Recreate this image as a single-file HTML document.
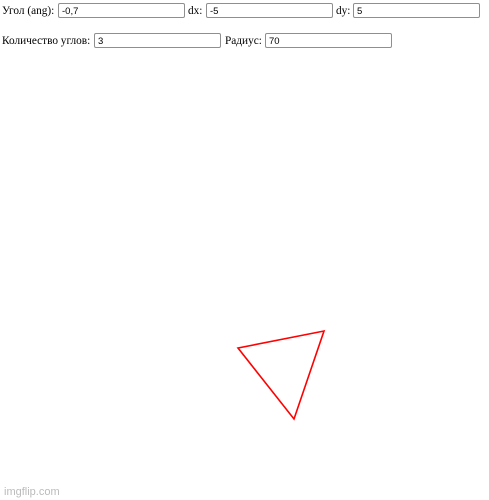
<!DOCTYPE html>
<html><head><meta charset="utf-8"><style>
body{margin:0;width:489px;height:500px;background:#fff;position:relative;overflow:hidden;font-family:"Liberation Serif",serif;font-size:11.3px;color:#000}
.l{position:absolute;line-height:14px;white-space:nowrap}
.i{position:absolute;box-sizing:border-box;height:15px;border:1px solid #8f8f8f;border-radius:2px;font-family:"Liberation Sans",sans-serif;font-size:9.5px;padding:2px 3px 0;line-height:11px;background:#fff}
</style></head><body>
<div class="l" style="left:2px;top:4px">Угол (ang):</div>
<div class="i" style="left:58px;top:3px;width:127px">-0,7</div>
<div class="l" style="left:188px;top:4px">dx:</div>
<div class="i" style="left:206px;top:3px;width:127px">-5</div>
<div class="l" style="left:336px;top:4px">dy:</div>
<div class="i" style="left:353px;top:3px;width:127px">5</div>
<div class="l" style="left:2px;top:34px">Количество углов:</div>
<div class="i" style="left:94px;top:33px;width:127px">3</div>
<div class="l" style="left:225px;top:34px">Радиус:</div>
<div class="i" style="left:265px;top:33px;width:127px">70</div>
<svg style="position:absolute;left:0;top:0" width="489" height="500"><polygon points="238,348 324,331 294,419" fill="none" stroke="#ff0000" stroke-width="1.6"/></svg>
<div class="l" style="left:4px;top:485px;font-family:'Liberation Sans',sans-serif;font-size:11px;color:#bbb">imgflip.com</div>
</body></html>
